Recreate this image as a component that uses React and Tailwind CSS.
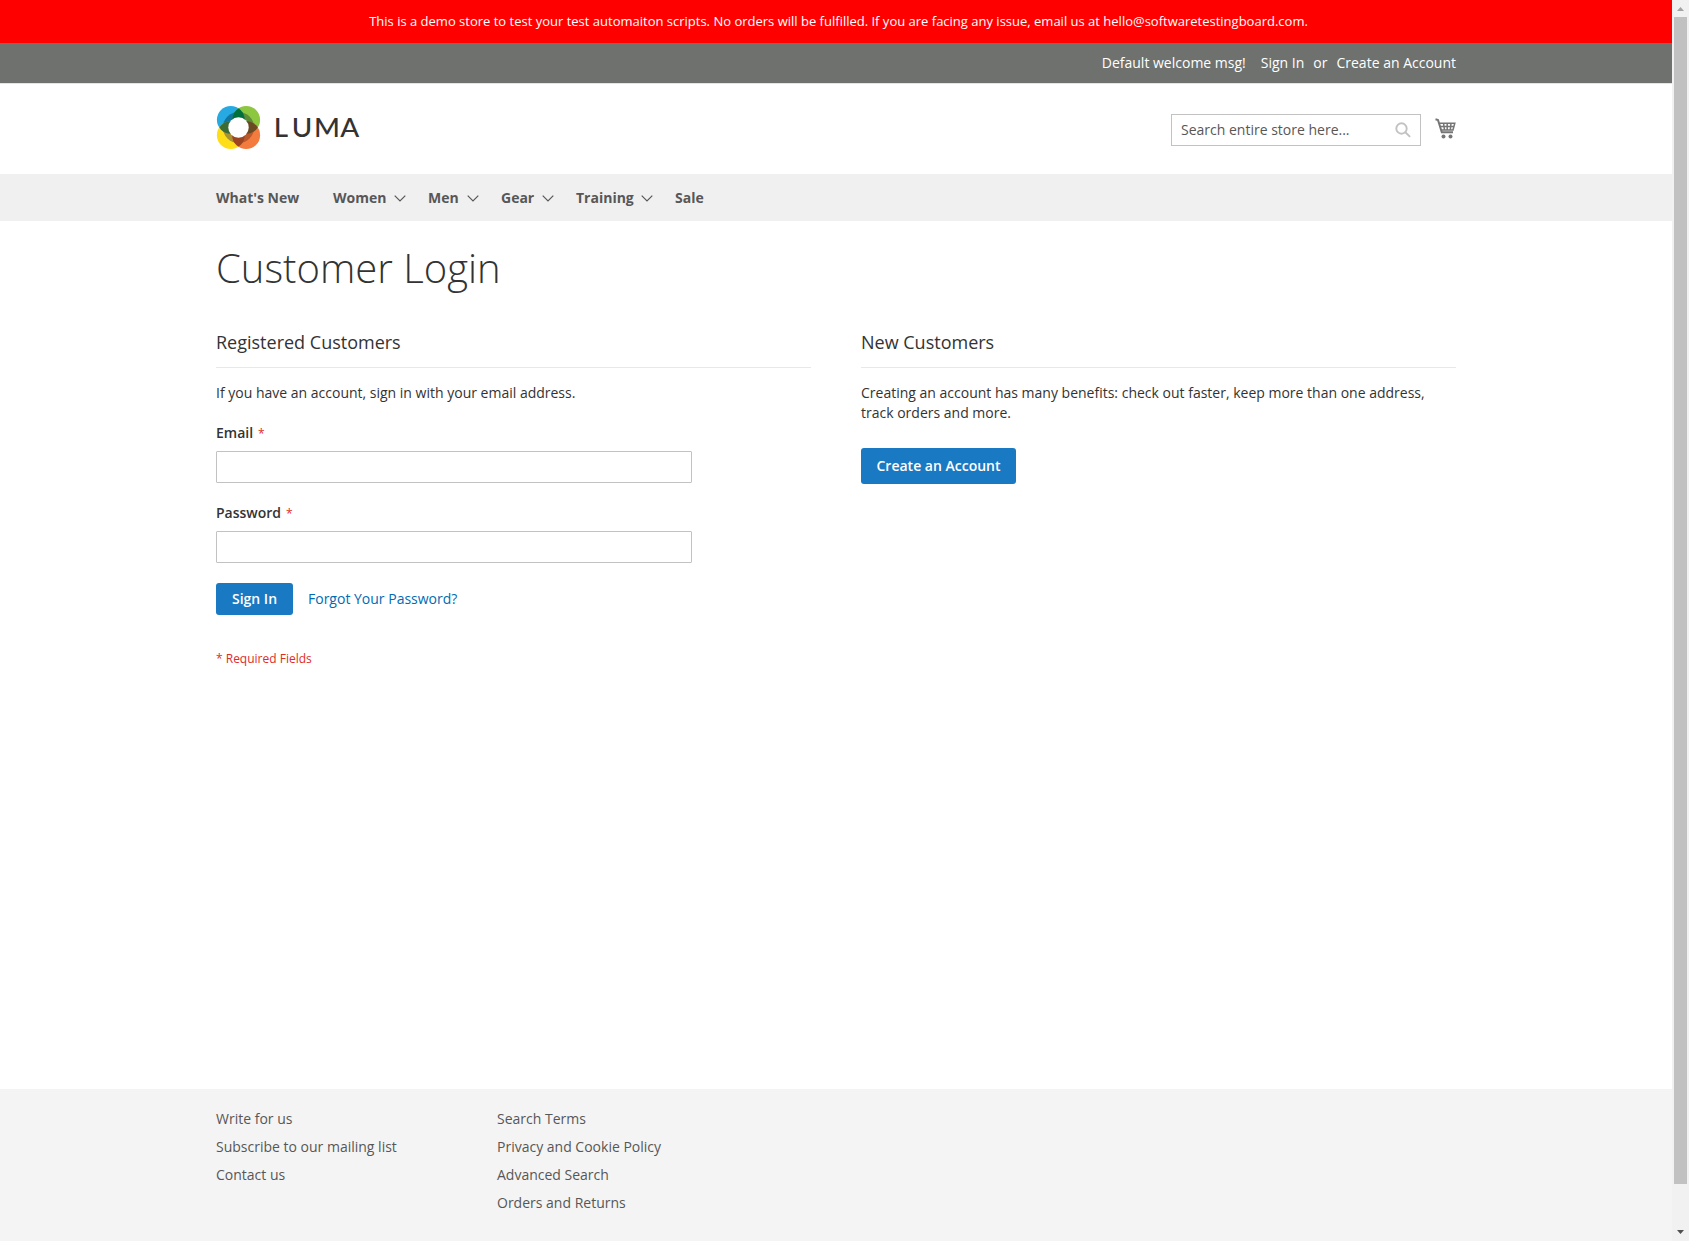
import React from "react";

function Logo() {
  return (
    <svg width="148" height="64" viewBox="0 0 148 64" className="block">
      <defs>
        <clipPath id="tl"><circle cx="14.8" cy="23.8" r="13.9" /></clipPath>
        <clipPath id="bl"><circle cx="14.8" cy="39.2" r="13.9" /></clipPath>
        <clipPath id="tr"><circle cx="30.2" cy="23.8" r="13.9" /></clipPath>
        <clipPath id="br"><circle cx="30.2" cy="39.2" r="13.9" /></clipPath>
      </defs>
      <circle cx="14.8" cy="23.8" r="13.9" fill="#27a9e1" />
      <circle cx="30.2" cy="23.8" r="13.9" fill="#8dc63f" />
      <circle cx="14.8" cy="39.2" r="13.9" fill="#ffde17" />
      <circle cx="30.2" cy="39.2" r="13.9" fill="#f47b3e" />
      <circle cx="22.5" cy="31.5" r="15.6" fill="#0f76a0" clipPath="url(#tl)" />
      <circle cx="22.5" cy="31.5" r="15.6" fill="#5a8c3a" clipPath="url(#tr)" />
      <circle cx="22.5" cy="31.5" r="15.6" fill="#a89232" clipPath="url(#bl)" />
      <circle cx="22.5" cy="31.5" r="15.6" fill="#b9592c" clipPath="url(#br)" />
      <g clipPath="url(#tl)">
        <circle cx="30.2" cy="23.8" r="13.9" fill="#00703c" />
        <circle cx="14.8" cy="39.2" r="13.9" fill="#3d6b35" />
      </g>
      <g clipPath="url(#br)">
        <circle cx="30.2" cy="23.8" r="13.9" fill="#6a4a22" />
        <circle cx="14.8" cy="39.2" r="13.9" fill="#9c4520" />
      </g>
      <circle cx="22.5" cy="31.5" r="10.2" fill="#fff" />
      <text transform="scale(1.05 1)" x="55 72.200 93.300 118.400" y="41" fontFamily="Lato" fontWeight="500" fontSize="26.500" fill="#333">LUMA</text>
    </svg>
  );
}

const NAV = [
  { label: "What's New", cls: "w-[117px]" },
  { label: "Women", cls: "w-[95px]", sub: true },
  { label: "Men", cls: "w-[73px]", sub: true },
  { label: "Gear", cls: "w-[75px]", sub: true },
  { label: "Training", cls: "w-[99px]", sub: true },
  { label: "Sale", cls: "" },
];

function Chevron() {
  return (
    <svg width="12" height="7" viewBox="0 0 12 7" className="mr-[22px] mt-0.5" fill="none" stroke="#575757" strokeWidth="1.2">
      <path d="M.7.7 6 6 11.3.7" />
    </svg>
  );
}

function Field({ label, type }) {
  return (
    <div className="mb-5">
      <label className="mb-2 block h-[20px] font-semibold leading-5">
        {label}<span className="ml-[5px] text-xs font-normal text-[#e02b27]">*</span>
      </label>
      <input type={type} className="block h-8 w-[476px] rounded-[1px] border border-[#c2c2c2] bg-white px-2" />
    </div>
  );
}

function BlockTitle({ children }) {
  return <h2 className="mb-[15px] h-[38px] border-b border-[#e8e8e8] text-lg font-normal leading-[25px] tracking-normal">{children}</h2>;
}

function FooterColumn({ items, className }) {
  return (
    <ul className={className}>
      {items.map((t) => <li key={t} className="h-7 leading-5"><a href="#">{t}</a></li>)}
    </ul>
  );
}

export default function App() {
  return (
    <div className="flex h-[1241px] w-[1689px] overflow-hidden bg-white font-['Open_Sans',sans-serif] text-sm text-[#333]">
      <div className="flex w-[1672px] flex-col">
        <div className="h-[43px] bg-[#ff0000] pl-[5px] text-center text-[13px] leading-[42px] text-white">
          This is a demo store to test your test automaiton scripts. No orders will be fulfilled. If you are facing any issue, email us at hello@softwaretestingboard.com.
        </div>
        <div className="flex h-[41px] items-center justify-end border-b border-[#e4e4e4] bg-[#6e716e] pr-[216px] text-white">
          <span className="mr-[15px]">Default welcome msg!</span>
          <a href="#">Sign In</a>
          <span className="mx-[9px]">or</span>
          <a href="#">Create an Account</a>
        </div>
        <header className="flex h-[90px] items-start justify-between px-[216px]">
          <div className="pt-3"><Logo /></div>
          <div className="flex pt-[30px]">
            <div className="flex h-8 w-[250px] items-center justify-between border border-[#c2c2c2] pl-[9px] pr-[9px] text-[#575757]">
              <span>Search entire store here...</span>
              <svg width="16" height="16" viewBox="0 0 16 16" fill="none" stroke="#c2c2c2" strokeWidth="1.9">
                <circle cx="6.5" cy="6.5" r="5.2" /><path d="m10.300 10.300 4.8 4.600" />
              </svg>
            </div>
            <svg width="21" height="21" viewBox="0 0 21 21" className="ml-[14px] mt-1" fill="none" stroke="#757575">
              <path d="M0.500 1.300 3 2 6.800 14.200H18" strokeWidth="2" />
              <path d="M4.500 5.200h15.300l-1.800 6.800H6.500M5 8.600h14M8.500 5l1 7M12.200 5v7M16 5l-.7 7" strokeWidth="1.500" />
              <circle cx="8.500" cy="18.500" r="2" fill="#757575" stroke="none" />
              <circle cx="15.500" cy="18.500" r="2" fill="#757575" stroke="none" />
            </svg>
          </div>
        </header>
        <nav className="flex h-[47px] items-center bg-[#f0f0f0] px-[216px] font-bold text-[#575757]">
          {NAV.map((n) => (
            <a key={n.label} href="#" className={"flex items-center justify-between " + n.cls}>
              {n.label}{n.sub && <Chevron />}
            </a>
          ))}
        </nav>
        <main className="flex-1 px-[216px] pt-[25px]">
          <h1 className="mb-10 h-11 text-[40px] font-light leading-[44px]">Customer Login</h1>
          <div className="flex justify-between">
            <section className="w-[595px]">
              <BlockTitle>Registered Customers</BlockTitle>
              <p className="mb-5 leading-5">If you have an account, sign in with your email address.</p>
              <Field label="Email" type="email" />
              <Field label="Password" type="password" />
              <div className="flex items-center">
                <button className="h-8 w-[77px] rounded-[3px] bg-[#1979c3] font-semibold text-white">Sign In</button>
                <a href="#" className="ml-[15px] text-[#006bb4]">Forgot Your Password?</a>
              </div>
              <p className="mt-[34px] text-xs leading-5 text-[#e02b27]">* Required Fields</p>
            </section>
            <section className="w-[595px]">
              <BlockTitle>New Customers</BlockTitle>
              <p className="mb-[25px] w-[580px] leading-5">Creating an account has many benefits: check out faster, keep more than one address, track orders and more.</p>
              <button className="h-9 w-[155px] rounded-[3px] bg-[#1979c3] font-semibold text-white">Create an Account</button>
            </section>
          </div>
        </main>
        <footer className="flex h-[152px] bg-[#f4f4f4] px-[216px] pt-5 text-[#575757]">
          <FooterColumn className="w-[281px]" items={["Write for us", "Subscribe to our mailing list", "Contact us"]} />
          <FooterColumn className="" items={["Search Terms", "Privacy and Cookie Policy", "Advanced Search", "Orders and Returns"]} />
        </footer>
      </div>
      <div className="flex w-[17px] flex-col items-center justify-between bg-[#f1f1f1]">
        <svg width="17" height="17"><path d="M5 11h7L8.5 7z" fill="#a3a3a3" /></svg>
        <div className="mb-auto h-[1167px] w-[13px] bg-[#c1c1c1]" />
        <svg width="17" height="17"><path d="M5 6h7L8.500 10z" fill="#505050" /></svg>
      </div>
    </div>
  );
}
